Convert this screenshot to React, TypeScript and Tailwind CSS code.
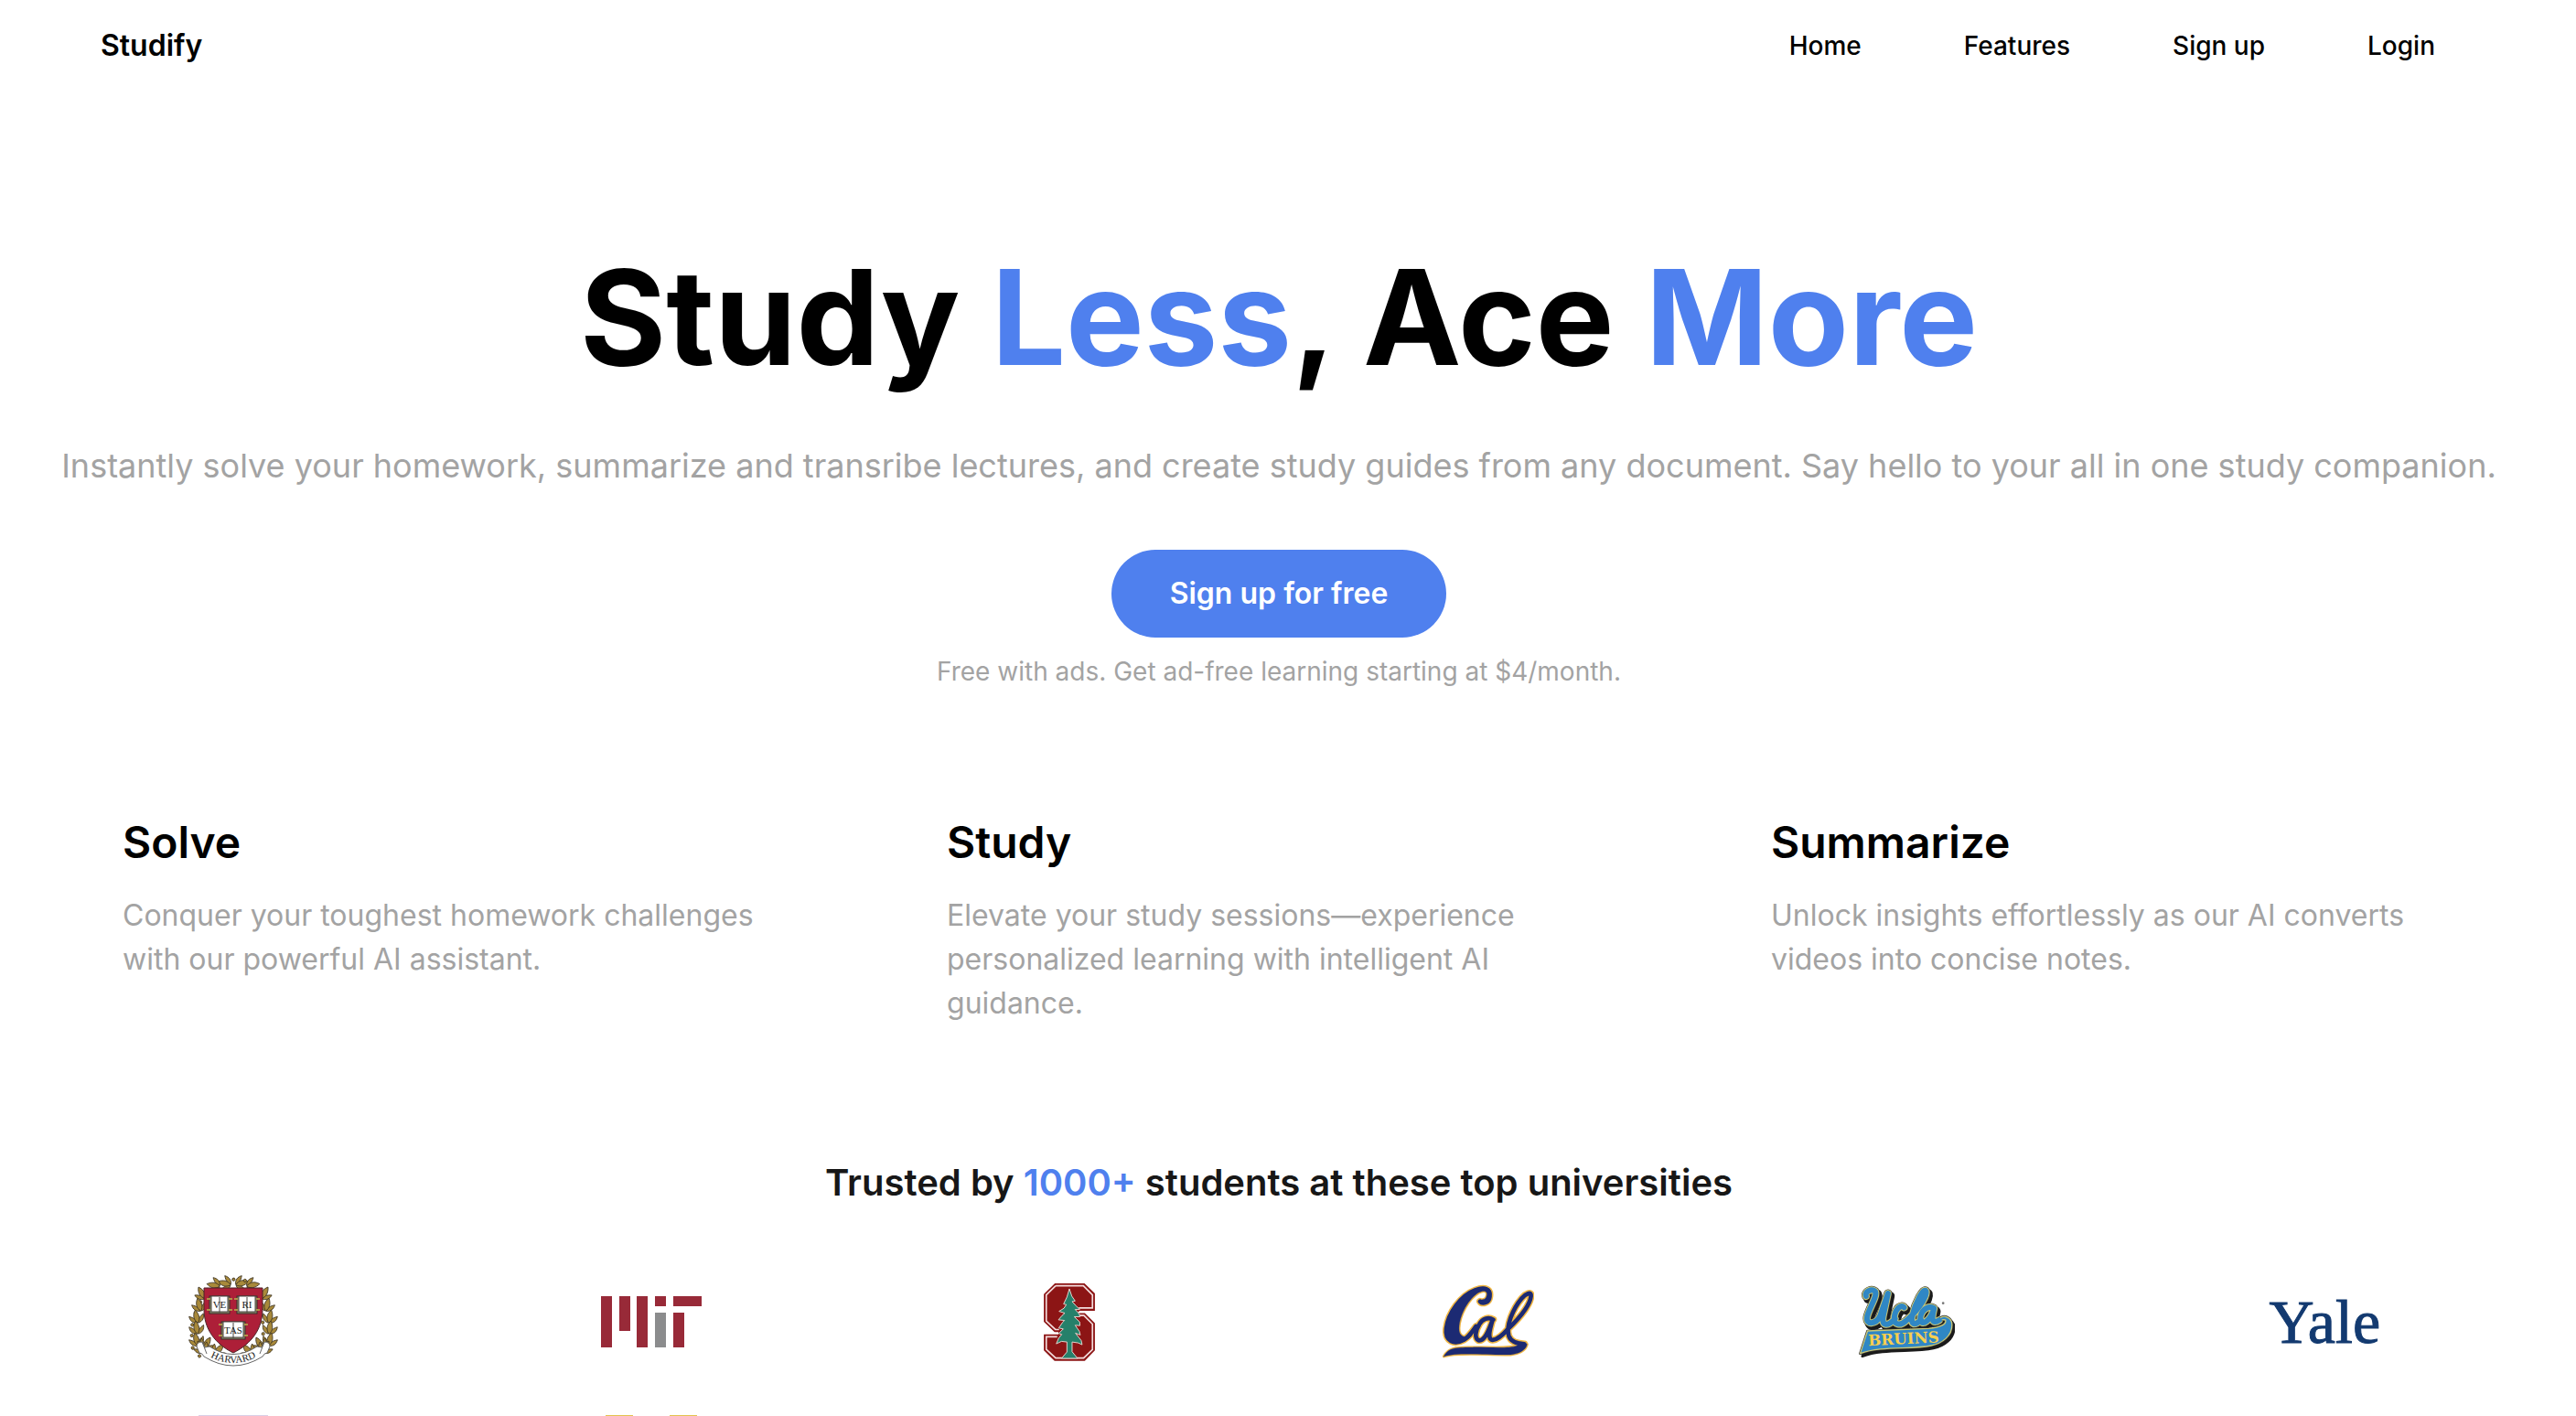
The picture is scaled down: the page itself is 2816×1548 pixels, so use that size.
const blue = "text-[#4f80ee]";

const links = ["Home", "Features", "Sign up", "Login"];

const features = [
  { title: "Solve", text: "Conquer your toughest homework challenges with our powerful AI assistant." },
  { title: "Study", text: "Elevate your study sessions—experience personalized learning with intelligent AI guidance." },
  { title: "Summarize", text: "Unlock insights effortlessly as our AI converts videos into concise notes." },
];

function Leaf({ x, y, r }: { x: number; y: number; r: number }) {
  return (
    <g transform={`translate(${x} ${y}) rotate(${r}) scale(0.8)`} fill="#a8893a" stroke="#3d3423" strokeWidth="1">
      <path d="M-1 8C-7 7-10 3-10-3C-4 0-1 3-1 8Z" />
      <path d="M1 8C7 7 10 3 10-3C4 0 1 3 1 8Z" />
      <path d="M0 8C-5 3-5-4 0-10C4-4 5 3 0 8Z" />
      <circle cx="-8" cy="9" r="2" />
    </g>
  );
}

function Book({ x, y, w, text }: { x: number; y: number; w: number; text: string }) {
  return (
    <g transform={`translate(${x} ${y})`}>
      <rect x={-w - 2} y="-9" width={w * 2 + 4} height="19" fill="#8d8a6a" stroke="#35302b" strokeWidth="1" />
      <path d={`M${-w - 5}-6h4M${-w - 5} 6h4M${w + 1}-6h4M${w + 1} 6h4`} stroke="#b0934a" strokeWidth="2" />
      <rect x={-w} y="-9" width={w * 2} height="17" fill="#fff" stroke="#4b4642" strokeWidth="1" />
      <path d="M0-8V9" stroke="#4b4642" strokeWidth="1" />
      <text x="0" y="4" fontSize="11" textAnchor="middle" fill="#222">{text}</text>
    </g>
  );
}

function Harvard() {
  const side = [
    [-9, -42, -75], [-21, -40, -80], [-34, -31, -30], [-37, -18, -15], [-40, -5, -12], [-40, 7, -8], [-40, 20, -15], [-29, 24, 30], [-16, 31, 40], [-35, 28, -30],
  ];
  return (
    <svg viewBox="-60 -60 120 120" className="size-[120px]" role="img" aria-label="Harvard" fontFamily="Liberation Serif, serif">
      {side.map(([x, y, r]) => <Leaf key={`l${x}${y}`} x={x} y={y} r={r} />)}
      {side.map(([x, y, r]) => <Leaf key={`r${x}${y}`} x={-x} y={y} r={-r} />)}
      <path d="M-32-37H32V-14C32 8 20 24 0 34C-20 24-32 8-32-14Z" fill="#ad1f38" stroke="#4a2527" strokeWidth="1" />
      <Book x={-15} y={-19} w={9} text="VE" />
      <Book x={15} y={-19} w={9} text="RI" />
      <Book x={0} y={9} w={11} text="TAS" />
      <path d="M-34 22Q-40 22-40 27L-37 34Q-34 34-32 38Q0 58 32 38Q34 34 37 34L40 27Q40 22 34 22L31 28L26 27Q0 44-26 27L-31 28Z" fill="#fff" stroke="#666" strokeWidth="1" />
      <path d="M-34 22L-29 35M34 22L29 35" stroke="#666" strokeWidth="1" />
      <path id="harvard-ribbon" d="M-30 36Q0 54 30 36" fill="none" />
      <text fontSize="11" fill="#222"><textPath href="#harvard-ribbon" startOffset="50%" textAnchor="middle">HARVARD</textPath></text>
    </svg>
  );
}

function Mit() {
  return (
    <svg viewBox="0 0 110 56" className="h-14 w-[110px]" role="img" aria-label="MIT" fill="#982a38">
      <path d="M0 0h12v56H0zM20 0h12v38H20zM39 0h12v56H39zM59 0h12v11H59zM79 0h31v11H79zM79 18h12v38H79z" />
      <path d="M59 18h12v38H59z" fill="#8b8c8d" />
    </svg>
  );
}

function Stanford() {
  return (
    <svg viewBox="0 0 168 256" className="h-[85px] w-14" role="img" aria-label="Stanford">
      <path d="M37 2H133L166 34V88H117L104 100H134L166 132V220L134 253H36L2 220V170H50V158H36L2 126V36Z" fill="#8c1515" stroke="#8c1515" strokeWidth="4" />
      <path d="M39 8H130L160 38V81H115M113 106H132L160 134V218L131 246H39L8 217V176H44M50 152H38L8 124V38L39 8" fill="none" stroke="#f3dcdc" strokeWidth="5" />
      <path d="M84 18L92 42L103 58L93 60L106 74L118 86L103 86L116 100L119 110L100 110L118 127L119 139L103 138L117 158L120 170L104 164L123 188L126 202L113 196L93 193V225L111 247H58L76 226V193L58 191L41 199L49 180L59 168L49 165L64 150L49 147L62 128L68 122L48 120L60 106L69 98L50 92L66 82L74 70L65 68L76 45Z" fill="#26806a" stroke="#e3d3cd" strokeWidth="3" strokeLinejoin="round" />
    </svg>
  );
}

function Cal() {
  const letters = "M206 128C214 138 236 133 238 112C242 84 218 80 190 91C144 108 101 166 95 217C90 259 121 272 153 254C170 244 181 226 193 210M250 188C232 178 214 186 204 203C190 225 188 249 201 256C218 260 232 235 248 187C237 224 230 254 248 255C265 254 284 235 299 218C323 195 370 149 374 110C376 94 356 103 343 118C315 151 290 210 301 242C309 263 330 267 352 268";
  const swash = "M87 309C103 276 137 280 181 279C230 278 303 285 328 273C340 267 330 257 345 263L361 269C358 290 329 302 307 303C247 306 133 293 87 309Z";
  const body = "M210 124C208 140 238 139 242 112C246 78 217 74 187 88C137 110 93 170 93 220C93 263 132 277 170 250C187 237 185 222 177 239C160 251 136 245 137 216C139 171 169 119 202 99C222 88 235 96 226 115C220 126 211 117 202 129Z";
  return (
    <svg viewBox="80 72 304 246" className="h-[82px] w-[101px]" role="img" aria-label="Cal" strokeLinecap="round" strokeLinejoin="round">
      <g stroke="#f1b743" fill="#f1b743">
        <path d={letters} fill="none" strokeWidth="23" />
        <path d={body} strokeWidth="9" />
        <path d={swash} strokeWidth="9" />
      </g>
      <g fill="#1c2a73" stroke="#1c2a73">
        <path d={letters} fill="none" strokeWidth="14" />
        <path d={body} strokeWidth="1" />
        <path d={swash} strokeWidth="1" />
      </g>
    </svg>
  );
}

function Ucla() {
  const script = "M93 114C87 99 112 88 123 98C132 112 103 154 97 181C91 210 125 207 139 180L165 105L149 180C143 214 166 213 188 188M218 151C211 139 190 153 186 181C183 211 207 211 224 195C250 174 296 118 290 98C282 83 255 137 245 178C238 208 253 213 273 191M315 153C292 142 271 166 271 190C276 217 306 191 316 155C307 190 310 208 333 193";
  const tail = "M98 228L299 220C335 217 357 207 354 193C348 187 337 198 335 187C348 172 375 185 375 207C376 245 342 269 307 276C238 290 143 276 74 302Z";
  return (
    <svg viewBox="64 78 320 240" className="h-20 w-[107px]" role="img" aria-label="UCLA Bruins" strokeLinecap="round" strokeLinejoin="round">
      <g transform="translate(7 9)" stroke="#1b1b1b" fill="#1b1b1b">
        <path d={script} fill="none" strokeWidth="30" />
        <path d={tail} strokeWidth="8" />
      </g>
      <path d={script} fill="none" stroke="#333" strokeWidth="27" />
      <path d={script} fill="none" stroke="#c9c877" strokeWidth="24" />
      <path d={tail} fill="#2f87c5" stroke="#333" strokeWidth="8" />
      <path d={tail} fill="#2f87c5" stroke="#c9c877" strokeWidth="4" />
      <path d={script} fill="none" stroke="#2f87c5" strokeWidth="18" />
      <text x="101" y="277" fontSize="50" fontWeight="900" fontFamily="DejaVu Serif, serif" fill="#f8cf4d" transform="rotate(-3 101 276)">BRUINS</text>
      <circle cx="346" cy="137" r="4" fill="#777" />
    </svg>
  );
}

function Yale() {
  return (
    <span className="font-['Liberation_Serif',serif] text-[68px] leading-none text-[#133a70] [-webkit-text-stroke:1px]">Yale</span>
  );
}

const logos = [Harvard, Mit, Stanford, Cal, Ucla, Yale];

export default function App() {
  return (
    <div className="h-screen overflow-hidden bg-white pr-5 font-['Inter',sans-serif] text-black">
      <header className="flex h-[100px] items-center justify-between pr-[134px] pl-[110px]">
        <a href="#" className="text-[32px] font-semibold">Studify</a>
        <nav className="flex gap-28 text-[28px] font-medium">
          {links.map((l) => <a key={l} href="#">{l}</a>)}
        </nav>
      </header>

      <main>
        <section className="flex flex-col items-center pt-40 text-center">
          <h1 className="text-[144px] leading-[174px] font-bold">
            Study <span className={blue}>Less</span>, Ace <span className={blue}>More</span>
          </h1>
          <p className="mt-[53px] text-[36px] leading-[44px] text-[#a3a3a3]">
            Instantly solve your homework, summarize and transribe lectures, and create study guides from any document. Say hello to your all in one study companion.
          </p>
          <button className="mt-[70px] h-24 rounded-full bg-[#4f80ee] px-16 text-[32px] font-semibold text-white">Sign up for free</button>
          <p className="mt-5 text-[28px] leading-[34px] text-[#a3a3a3]">Free with ads. Get ad-free learning starting at $4/month.</p>
        </section>

        <section className="mt-[138px] grid grid-cols-3 gap-x-[175px] px-[134px]">
          {features.map((f) => (
            <article key={f.title}>
              <h2 className="text-[48px] leading-[64px] font-semibold">{f.title}</h2>
              <p className="mt-6 text-[32px] leading-[48px] text-[#a3a3a3]">{f.text}</p>
            </article>
          ))}
        </section>

        <section className="mt-[148px]">
          <h2 className="text-center text-[40px] leading-[48px] font-semibold text-[#171717]">
            Trusted by <span className={blue}>1000+</span> students at these top universities
          </h2>
          <div className="mt-[68px] grid grid-cols-6 gap-y-[42px] px-[26px]">
            {logos.map((Logo, i) => (
              <div key={i} className="flex h-[120px] items-center justify-center"><Logo /></div>
            ))}
            <div className="flex justify-center"><div className="h-10 w-[76px] bg-[#d9cfe6]" /></div>
            <div className="flex justify-center gap-10"><div className="h-10 w-[30px] bg-[#e3c34f]" /><div className="h-10 w-[30px] bg-[#e3c34f]" /></div>
          </div>
        </section>
      </main>
    </div>
  );
}
